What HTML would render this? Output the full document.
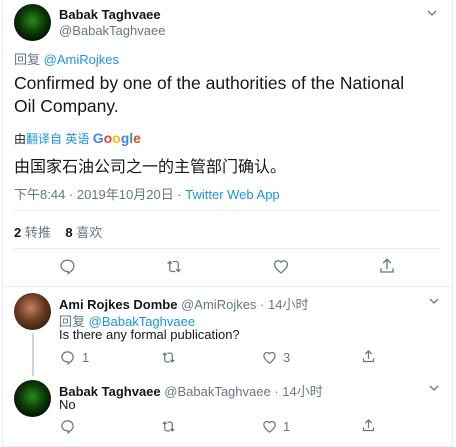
<!DOCTYPE html>
<html><head><meta charset="utf-8"><style>
*{margin:0;padding:0;box-sizing:border-box}
body{width:456px;height:447px;background:#fff;font-family:"Liberation Sans","Noto Sans CJK SC",sans-serif;color:#14171a;position:relative;overflow:hidden}
.a{position:absolute;white-space:nowrap}
.g{color:#657786}.b{color:#1b95e0}
.av{position:absolute;width:37px;height:37px;border-radius:50%;background:radial-gradient(circle at 50% 45%,#2a8a1a 0%,#0c3a08 45%,#020a02 80%)}
.hr{position:absolute;height:1px;background:#e6ecf0}
svg{position:absolute}
</style></head><body>
<div style="position:absolute;left:2px;top:0;width:451px;height:447px;border-left:1px solid #e6ecf0;border-right:1px solid #e6ecf0"></div>
<div class="av" style="left:14px;top:4px"></div>
<div class="a" style="left:59px;top:7px;font-size:13px;font-weight:bold">Babak Taghvaee</div>
<div class="a g" style="left:59px;top:23px;font-size:13px">@BabakTaghvaee</div>
<svg style="left:426px;top:8px" width="12" height="10" viewBox="0 0 12 10"><path d="M2 3l4 4 4-4" fill="none" stroke="#657786" stroke-width="1.3"/></svg>
<div class="a" style="left:14px;top:49px;font-size:13px"><span class="g">回复</span> <span class="b">@AmiRojkes</span></div>
<div class="a" style="left:14px;top:72px;font-size:17.5px;line-height:23px">Confirmed by one of the authorities of the National<br>Oil Company.</div>
<div class="a" style="left:14px;top:130px;font-size:12px">由<span class="b">翻译自 英语</span> <span style="font-size:14px;font-weight:bold"><span style="color:#4285f4">G</span><span style="color:#ea4335">o</span><span style="color:#fbbc05">o</span><span style="color:#4285f4">g</span><span style="color:#34a853">l</span><span style="color:#ea4335">e</span></span></div>
<div class="a" style="left:14px;top:153px;font-size:16px">由国家石油公司之一的主管部门确认。</div>
<div class="a g" style="left:14px;top:184px;font-size:13px">下午8:44 · 2019年10月20日 · <span class="b">Twitter Web App</span></div>
<div class="hr" style="left:14px;width:426px;top:210px"></div>
<div class="a" style="left:14px;top:222px;font-size:13px"><b>2</b> <span class="g">转推</span>&nbsp;&nbsp;&nbsp;&nbsp;<b>8</b> <span class="g">喜欢</span></div>
<div class="hr" style="left:14px;width:426px;top:248px"></div>
<svg style="left:59px;top:258px" width="17" height="17" viewBox="0 0 24 24" fill="none" stroke="#657786" stroke-width="1.8"><path d="M12 3a9 8 0 1 0 0 16h1v3l5-4c2-2 3-4 3-7a9 8 0 0 0-9-8z"/></svg>
<svg style="left:165px;top:258px" width="18" height="17" viewBox="0 0 24 24" fill="none" stroke="#657786" stroke-width="1.8"><path d="M3 8l3-3 3 3M6 5v11a3 3 0 0 0 3 3h5M21 16l-3 3-3-3M18 19V8a3 3 0 0 0-3-3h-5"/></svg>
<svg style="left:272px;top:258px" width="18" height="17" viewBox="0 0 24 24" fill="none" stroke="#657786" stroke-width="1.8"><path d="M12 21s-9-6-9-12a5 5 0 0 1 9-3 5 5 0 0 1 9 3c0 6-9 12-9 12z"/></svg>
<svg style="left:378px;top:257px" width="18" height="18" viewBox="0 0 24 24" fill="none" stroke="#657786" stroke-width="1.8"><path d="M12 3v13M7 8l5-5 5 5M4 15v5h16v-5"/></svg>
<div class="hr" style="left:2px;width:451px;top:286px"></div>
<div class="av" style="left:14px;top:293px;background:radial-gradient(circle at 45% 40%,#c08060 0%,#6a3a22 45%,#2a1a10 85%)"></div>
<div class="a" style="left:59px;top:294px;font-size:13px"><b>Ami Rojkes Dombe</b> <span class="g">@AmiRojkes · 14小时</span></div>
<svg style="left:428px;top:296px" width="12" height="10" viewBox="0 0 12 10"><path d="M2 3l4 4 4-4" fill="none" stroke="#657786" stroke-width="1.3"/></svg>
<div class="a" style="left:59px;top:311px;font-size:13px"><span class="g">回复</span> <span class="b">@BabakTaghvaee</span></div>
<div class="a" style="left:59px;top:327px;font-size:13px">Is there any formal publication?</div>
<div style="position:absolute;left:32px;top:333px;width:2px;height:43px;background:#ccd6dd"></div>
<svg style="left:60px;top:350px" width="15" height="15" viewBox="0 0 24 24" fill="none" stroke="#657786" stroke-width="2"><path d="M12 3a9 8 0 1 0 0 16h1v3l5-4c2-2 3-4 3-7a9 8 0 0 0-9-8z"/></svg>
<div class="a g" style="left:82px;top:350px;font-size:13px">1</div>
<svg style="left:161px;top:350px" width="15" height="15" viewBox="0 0 24 24" fill="none" stroke="#657786" stroke-width="2"><path d="M3 8l3-3 3 3M6 5v11a3 3 0 0 0 3 3h5M21 16l-3 3-3-3M18 19V8a3 3 0 0 0-3-3h-5"/></svg>
<svg style="left:262px;top:350px" width="15" height="15" viewBox="0 0 24 24" fill="none" stroke="#657786" stroke-width="2"><path d="M12 21s-9-6-9-12a5 5 0 0 1 9-3 5 5 0 0 1 9 3c0 6-9 12-9 12z"/></svg>
<div class="a g" style="left:283px;top:350px;font-size:13px">3</div>
<svg style="left:361px;top:349px" width="15" height="15" viewBox="0 0 24 24" fill="none" stroke="#657786" stroke-width="2"><path d="M12 3v13M7 8l5-5 5 5M4 15v5h16v-5"/></svg>
<div class="av" style="left:14px;top:380px"></div>
<div class="a" style="left:59px;top:381px;font-size:13px"><b>Babak Taghvaee</b> <span class="g">@BabakTaghvaee · 14小时</span></div>
<svg style="left:428px;top:383px" width="12" height="10" viewBox="0 0 12 10"><path d="M2 3l4 4 4-4" fill="none" stroke="#657786" stroke-width="1.3"/></svg>
<div class="a" style="left:59px;top:397px;font-size:13px">No</div>
<svg style="left:60px;top:419px" width="15" height="15" viewBox="0 0 24 24" fill="none" stroke="#657786" stroke-width="2"><path d="M12 3a9 8 0 1 0 0 16h1v3l5-4c2-2 3-4 3-7a9 8 0 0 0-9-8z"/></svg>
<svg style="left:161px;top:419px" width="15" height="15" viewBox="0 0 24 24" fill="none" stroke="#657786" stroke-width="2"><path d="M3 8l3-3 3 3M6 5v11a3 3 0 0 0 3 3h5M21 16l-3 3-3-3M18 19V8a3 3 0 0 0-3-3h-5"/></svg>
<svg style="left:262px;top:419px" width="15" height="15" viewBox="0 0 24 24" fill="none" stroke="#657786" stroke-width="2"><path d="M12 21s-9-6-9-12a5 5 0 0 1 9-3 5 5 0 0 1 9 3c0 6-9 12-9 12z"/></svg>
<div class="a g" style="left:283px;top:419px;font-size:13px">1</div>
<svg style="left:361px;top:418px" width="15" height="15" viewBox="0 0 24 24" fill="none" stroke="#657786" stroke-width="2"><path d="M12 3v13M7 8l5-5 5 5M4 15v5h16v-5"/></svg>
<div class="hr" style="left:2px;width:451px;top:446px"></div>
</body></html>
